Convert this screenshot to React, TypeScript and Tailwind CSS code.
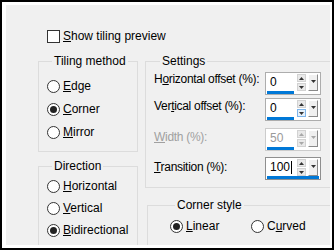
import React from 'react';

function Radio({ checked = false }: { checked?: boolean }) {
  return (
    <span className="flex h-[13px] w-[13px] shrink-0 items-center justify-center rounded-full border border-[#333] bg-white">
      {checked && <span className="h-[7px] w-[7px] rounded-full bg-[#222]" />}
    </span>
  );
}

function Tri({ up = false, color = '#333' }: { up?: boolean; color?: string }) {
  return (
    <svg width="5" height="3" viewBox="0 0 5 3" aria-hidden="true">
      <path d={up ? 'M2.5 0 L5 3 L0 3 Z' : 'M0 0 L5 0 L2.5 3 Z'} fill={color} />
    </svg>
  );
}

function RadioRow({ checked, children, h = 'h-[23px]' }: { checked?: boolean; children: React.ReactNode; h?: string }) {
  return (
    <div className={`flex items-center gap-[3px] whitespace-nowrap ${h}`}>
      <Radio checked={checked} />
      <span>{children}</span>
    </div>
  );
}

function Spin({
  value,
  full = false,
  disabled = false,
  hoverDown = false,
  caret = false,
}: {
  value: string;
  full?: boolean;
  disabled?: boolean;
  hoverDown?: boolean;
  caret?: boolean;
}) {
  const arrow = disabled ? '#a8a8a8' : '#333';
  return (
    <div
      className={`flex h-[23px] w-[56px] shrink-0 flex-col border bg-white ${
        disabled ? 'border-[#cccccc]' : caret ? 'border-[#8f8f8f]' : 'border-[#adadad]'
      }`}
    >
      <div className="flex flex-1">
        <div className={`flex w-[31px] items-start pl-[4px] pt-[2px] ${disabled ? 'text-[#9a9a9a]' : 'text-black'}`}>
          {value}
          {caret && <span className="ml-[1px] mt-[1px] inline-block h-[13px] w-[1px] bg-black" />}
        </div>
        <div className="flex w-[9px] flex-col gap-[1px] pt-[1px]">
          <div className="flex h-[8px] items-center justify-center border border-[#d2d2d2] bg-[#e9e9e9]">
            <Tri up color={arrow} />
          </div>
          <div
            className={`flex h-[8px] items-center justify-center border ${
              hoverDown ? 'border-[#7eb4ea] bg-[#e5f1fb]' : 'border-[#d2d2d2] bg-[#e9e9e9]'
            }`}
          >
            <Tri color={arrow} />
          </div>
        </div>
        <div className="ml-[2px] mr-[2px] mt-[1px] flex w-[10px] justify-center border-b border-l border-r border-t border-b-[#8a8a8a] border-l-white border-r-[#8a8a8a] border-t-white bg-[#f0f0f0] pt-[5px]">
          <span className="h-[3px]">
            <Tri color={arrow} />
          </span>
        </div>
      </div>
      <div className={`ml-[1px] h-[3px] bg-[#0078d7] ${full ? 'w-[52px]' : 'w-[27px]'}`} />
    </div>
  );
}

export default function App() {
  return (
    <div className="h-[252px] w-[336px] bg-white font-['Liberation_Sans',Arial,sans-serif] text-[12px] leading-[15px] text-black">
      <div className="flex h-[250px] w-[334px] border-2 border-black bg-white pb-[3px] pl-[4px] pr-[2px] pt-[3px]">
        <div className="flex-1 overflow-hidden bg-[#f0f0f0] pl-[32px] pt-[24px]">
          {/* preview toggle */}
          <div className="flex h-[15px] items-center gap-[3px] pl-[9px]">
            <span className="h-[13px] w-[13px] border border-[#333] bg-white" />
            <span>
              <span className="underline">S</span>how tiling preview
            </span>
          </div>

          <div className="mt-[10px] flex gap-[7px]">
            {/* left column */}
            <div className="flex w-[100px] shrink-0 flex-col">
              <fieldset className="border border-[#dcdcdc] pb-[7px] pl-[8px] pt-[6px]">
                <legend className="ml-[5px] px-[2px]">Tiling method</legend>
                <RadioRow>
                  <span className="underline">E</span>dge
                </RadioRow>
                <RadioRow checked>
                  <span className="underline">C</span>orner
                </RadioRow>
                <RadioRow>
                  <span className="underline">M</span>irror
                </RadioRow>
              </fieldset>
              <fieldset className="mt-[7px] border border-[#dcdcdc] pb-[12px] pl-[8px] pt-[1px]">
                <legend className="ml-[5px] px-[2px]">Direction</legend>
                <RadioRow h="h-[22px]">
                  <span className="underline">H</span>orizontal
                </RadioRow>
                <RadioRow h="h-[22px]">
                  <span className="underline">V</span>ertical
                </RadioRow>
                <RadioRow checked h="h-[22px]">
                  <span className="underline">B</span>idirectional
                </RadioRow>
              </fieldset>
            </div>

            {/* right column */}
            <div className="flex w-[200px] shrink-0 flex-col">
              <fieldset className="border border-[#dcdcdc] pb-[7px] pl-[8px] pt-[3px]">
                <legend className="ml-[6px] px-[2px]">Settings</legend>
                <div className="flex items-start">
                  <span className="w-[111px] shrink-0 whitespace-nowrap tracking-[-0.3px]">
                    H<span className="underline">o</span>rizontal offset (%):
                  </span>
                  <Spin value="0" />
                </div>
                <div className="mt-[3px] flex items-start">
                  <span className="w-[111px] shrink-0 whitespace-nowrap pt-[1px] tracking-[-0.3px]">
                    Ver<span className="underline">t</span>ical offset (%):
                  </span>
                  <Spin value="0" hoverDown />
                </div>
                <div className="mt-[7px] flex items-start">
                  <span className="w-[111px] shrink-0 whitespace-nowrap pt-[2px] tracking-[-0.3px] text-[#a0a0a0]">
                    <span className="underline">W</span>idth (%):
                  </span>
                  <Spin value="50" disabled />
                </div>
                <div className="mt-[6px] flex items-start">
                  <span className="w-[111px] shrink-0 whitespace-nowrap pt-[3px] tracking-[-0.3px]">
                    <span className="underline">T</span>ransition (%):
                  </span>
                  <Spin value="100" full caret />
                </div>
              </fieldset>
              <fieldset className="ml-[2px] mt-[10px] border border-[#dcdcdc] pb-[12px] pl-[22px] pt-[2px]">
                <legend className="ml-[5px] px-[2px]">Corner style</legend>
                <div className="flex">
                  <div className="w-[81px]">
                    <RadioRow checked>
                      <span className="underline">L</span>inear
                    </RadioRow>
                  </div>
                  <RadioRow>
                    C<span className="underline">u</span>rved
                  </RadioRow>
                </div>
              </fieldset>
            </div>
          </div>
        </div>
      </div>
    </div>
  );
}
